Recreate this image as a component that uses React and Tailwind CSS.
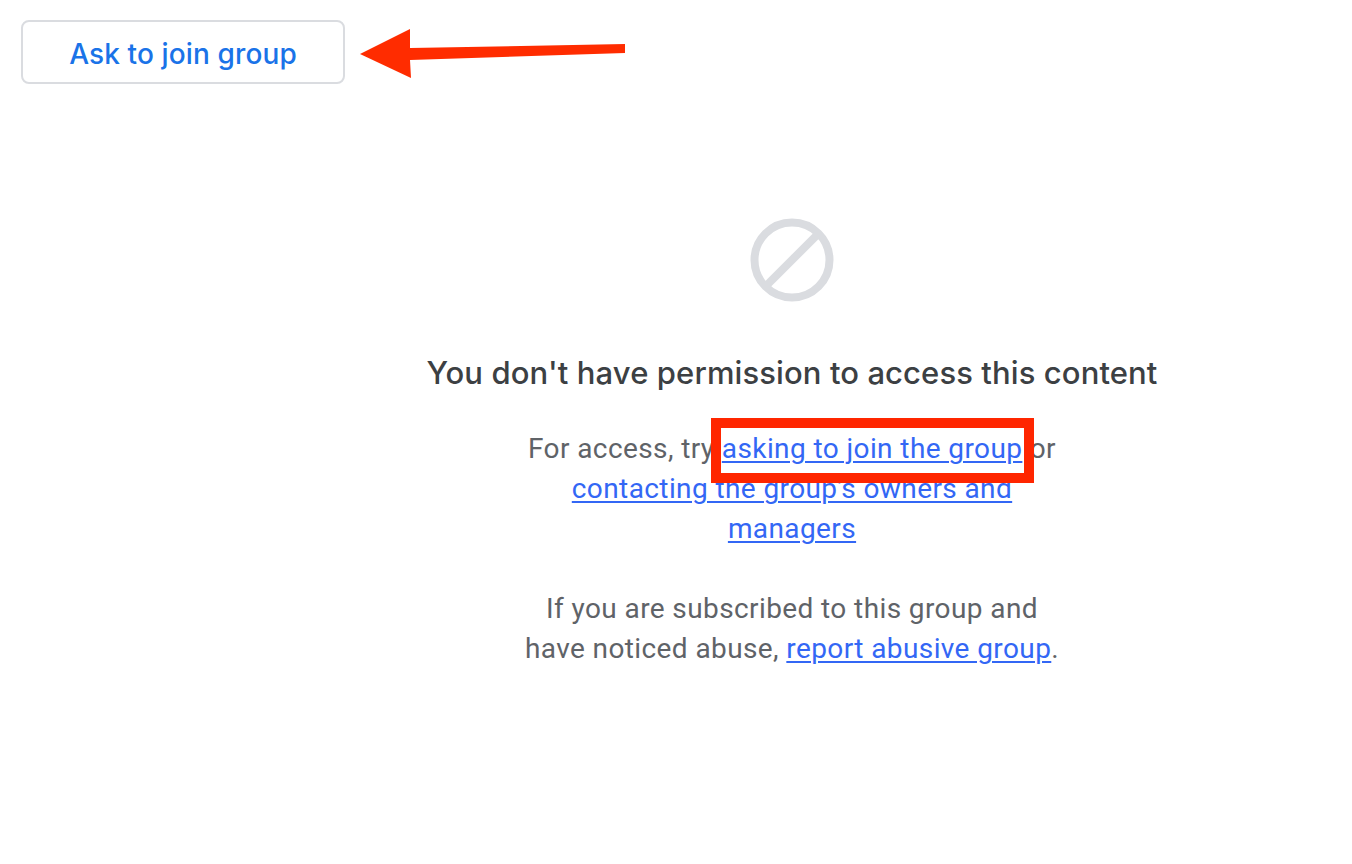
import React from 'react';

const linkClass = 'text-[#3367f5] underline underline-offset-[3px] decoration-[2px]';

const BlockedIcon = () => (
  <svg width="84" height="84" viewBox="0 0 84 84" fill="none" stroke="#dadce0" strokeWidth="8">
    <circle cx="42" cy="42" r="37.5" />
    <path d="M15 69 L69 15" />
  </svg>
);

const App = () => {
  return (
    <div className="relative w-[1352px] h-[864px] overflow-hidden bg-white font-['Roboto',sans-serif]">
      <div className="pt-5 pl-[21px]">
        <button className="w-[324px] h-[64px] pt-[3px] rounded-[8px] border-2 border-[#dadce0] bg-white text-[#1a73e8] text-[28px] tracking-[0.12px] font-medium font-['Inter',sans-serif]">
          Ask to join group
        </button>
      </div>

      <div className="flex flex-col items-center w-[1352px] pl-[232px] pt-[134px]">
        <BlockedIcon />
        <h1 className="mt-[49px] text-[31px] leading-[44px] tracking-[0.1px] font-medium text-[#3c4043] font-['Inter',sans-serif]">
          You don't have permission to access this content
        </h1>
        <p className="mt-[34px] text-center text-[28px] leading-[40px] tracking-[0.4px] text-[#5f6368]">
          For access, try <a className={linkClass}>asking to join the group</a> or
          <br />
          <a className={linkClass}>contacting the group's owners and</a>
          <br />
          <a className={linkClass}>managers</a>
        </p>
        <p className="mt-[40px] text-center text-[28px] leading-[40px] tracking-[0.4px] text-[#5f6368]">
          If you are subscribed to this group and
          <br />
          have noticed abuse, <a className={linkClass}>report abusive group</a>.
        </p>
      </div>

      {/* screenshot annotations */}
      <svg className="absolute left-[355px] top-[24px]" width="275" height="60" viewBox="0 0 275 60">
        <path d="M5 30 L55 5 L55 24 L270 20 L270 29 L55 36 L56 54 Z" fill="#ff2c00" />
      </svg>
      <div className="absolute left-[711px] top-[418px] w-[323px] h-[65px] border-[10px] border-[#ff2600]" />
    </div>
  );
};

export default App;
